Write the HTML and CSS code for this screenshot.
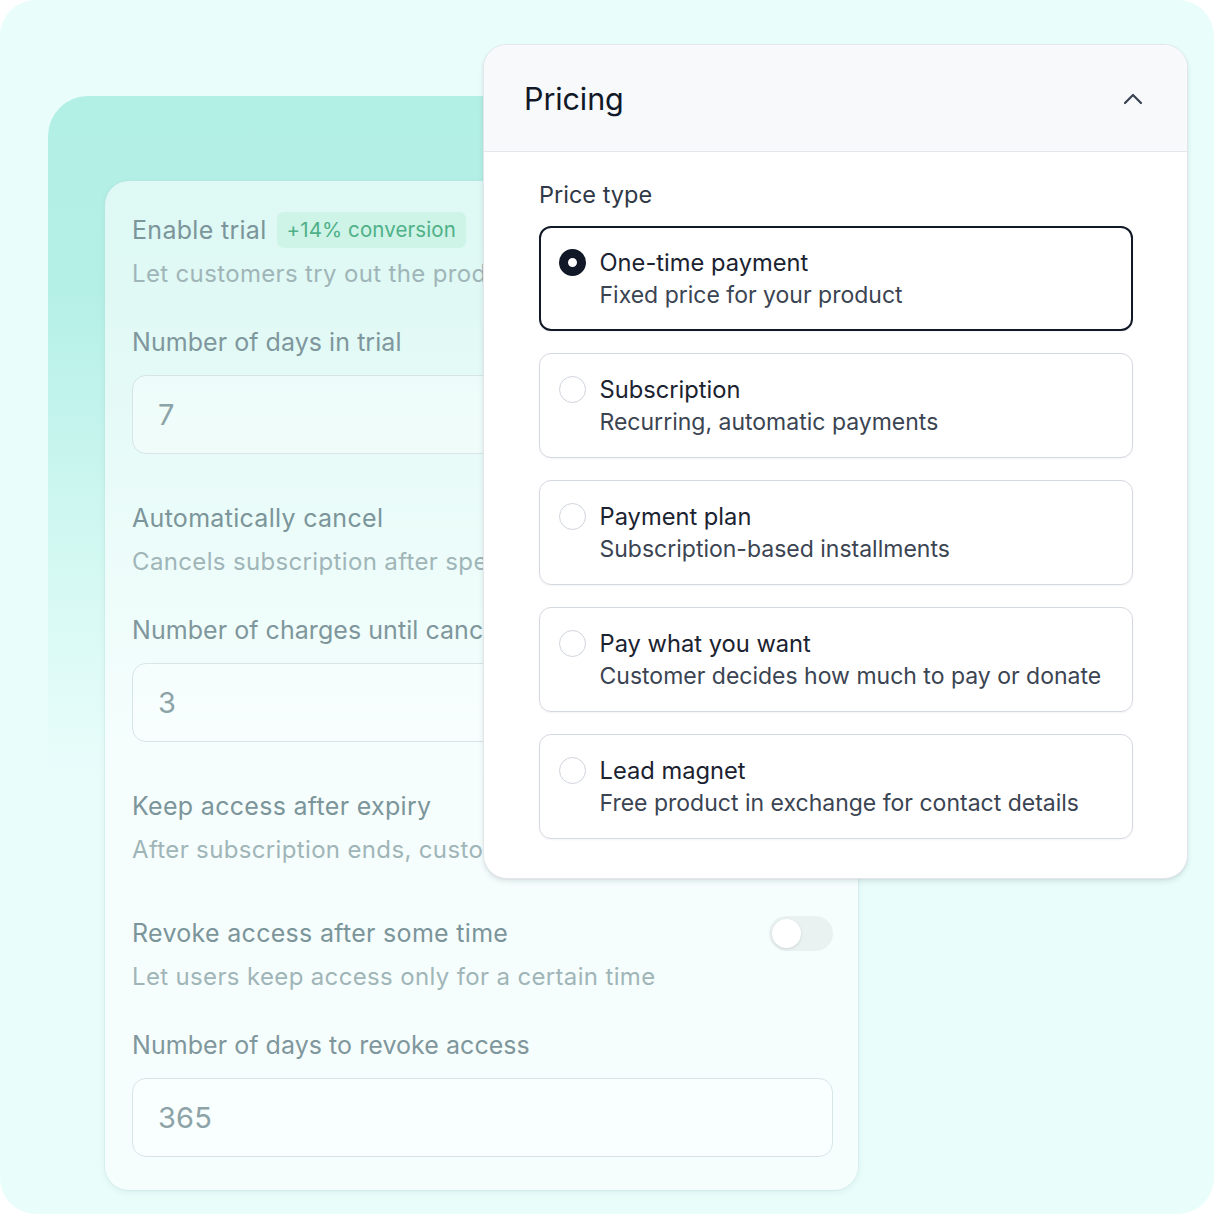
FILE: index.html
```html
<!DOCTYPE html>
<html lang="en">
<head>
<meta charset="utf-8">
<title>Pricing</title>
<link rel="stylesheet" href="styles.css">
</head>
<body>
<div class="frame">
  <div class="teal">
    <div class="back-card">
      <div class="row">
        <div class="title-wrap"><span class="title">Enable trial</span><span class="badge">+14% conversion</span></div>
        <span class="toggle on"><span class="knob"></span></span>
      </div>
      <div class="desc">Let customers try out the product first</div>
      <div class="label">Number of days in trial</div>
      <div class="input">7</div>

      <div class="row sec">
        <span class="title">Automatically cancel</span>
        <span class="toggle on"><span class="knob"></span></span>
      </div>
      <div class="desc">Cancels subscription after specified charges</div>
      <div class="label">Number of charges until cancellation</div>
      <div class="input">3</div>

      <div class="row sec">
        <span class="title">Keep access after expiry</span>
        <span class="toggle"><span class="knob"></span></span>
      </div>
      <div class="desc">After subscription ends, customers keep access</div>

      <div class="row sec2">
        <span class="title">Revoke access after some time</span>
        <span class="toggle"><span class="knob"></span></span>
      </div>
      <div class="desc">Let users keep access only for a certain time</div>
      <div class="label">Number of days to revoke access</div>
      <div class="input">365</div>
    </div>
  </div>

  <div class="pricing">
    <div class="p-head">
      <span class="p-title">Pricing</span>
      <svg class="chev" width="20" height="12" viewBox="0 0 20 12"><path d="M2 10 L10 2 L18 10" fill="none" stroke="#374151" stroke-width="2.2" stroke-linecap="round" stroke-linejoin="round"/></svg>
    </div>
    <div class="p-body">
      <div class="p-label">Price type</div>
      <div class="opt selected">
        <span class="radio"></span>
        <div class="opt-text"><div class="opt-title">One-time payment</div><div class="opt-desc">Fixed price for your product</div></div>
      </div>
      <div class="opt">
        <span class="radio"></span>
        <div class="opt-text"><div class="opt-title">Subscription</div><div class="opt-desc">Recurring, automatic payments</div></div>
      </div>
      <div class="opt">
        <span class="radio"></span>
        <div class="opt-text"><div class="opt-title">Payment plan</div><div class="opt-desc">Subscription-based installments</div></div>
      </div>
      <div class="opt">
        <span class="radio"></span>
        <div class="opt-text"><div class="opt-title">Pay what you want</div><div class="opt-desc">Customer decides how much to pay or donate</div></div>
      </div>
      <div class="opt">
        <span class="radio"></span>
        <div class="opt-text"><div class="opt-title">Lead magnet</div><div class="opt-desc">Free product in exchange for contact details</div></div>
      </div>
    </div>
  </div>
</div>
</body>
</html>
```

FILE: styles.css
```css
* { box-sizing: border-box; }
html, body { margin: 0; padding: 0; background: #ffffff; }
body { font-family: Inter, "Noto Sans", sans-serif; }

.frame {
  position: relative;
  width: 1214px;
  height: 1214px;
  border-radius: 36px;
  background: #e9fdfb;
  overflow: hidden;
  padding: 96px 48px 0 48px;
}

.teal {
  height: 1118px;
  border-radius: 40px 40px 0 0;
  background: linear-gradient(180deg, #b2efe5 0px, #b5f0e7 200px, rgba(200, 246, 238, 0.6) 480px, rgba(233, 253, 251, 0) 680px);
  padding: 85px 0 0 57px;
}

.back-card {
  width: 753px;
  height: 1009px;
  border-radius: 24px;
  background: rgba(255, 255, 255, 0.58);
  box-shadow: 0 2px 6px rgba(120, 160, 160, 0.14), 0 0 0 1px rgba(190, 225, 222, 0.25);
  padding: 31px 25px 0 27px;
  font-size: 24px;
  letter-spacing: 0.2px;
}

.row {
  height: 36px;
  display: flex;
  align-items: center;
  justify-content: space-between;
}
.row.sec { margin-top: 46px; }
.row.sec2 { margin-top: 49px; }

.title-wrap { display: flex; align-items: center; gap: 10px; }
.title { color: #7b959a; line-height: 32px; font-size: 25px; letter-spacing: 0.3px; white-space: nowrap; }
.badge {
  display: inline-block;
  height: 36px;
  line-height: 36px;
  padding: 0 10px;
  border-radius: 7px;
  background: #cdf4e6;
  color: #50b088;
  font-size: 20.5px;
  letter-spacing: 0.1px;
}

.desc { margin-top: 10px; line-height: 32px; color: #a0b5b8; letter-spacing: 0.35px; white-space: nowrap; }
.label { margin-top: 36px; line-height: 32px; color: #7f979c; font-size: 25px; letter-spacing: 0.05px; white-space: nowrap; }

.input {
  margin-top: 17px;
  height: 79px;
  border: 1.5px solid #d7e5e6;
  border-radius: 14px;
  background: rgba(255, 255, 255, 0.35);
  padding-left: 25px;
  display: flex;
  align-items: center;
  font-size: 29px;
  color: #8ca3a7;
}

.toggle {
  width: 64px;
  height: 35px;
  border-radius: 18px;
  background: #eaf1f1;
  padding: 3px;
  display: flex;
}
.toggle .knob {
  width: 29px;
  height: 29px;
  border-radius: 50%;
  background: #ffffff;
  box-shadow: 0 1px 3px rgba(0, 0, 0, 0.12);
}
.toggle.on { justify-content: flex-end; background: #9ed9c7; }

/* Pricing overlay card */
.pricing {
  position: absolute;
  left: 483px;
  top: 44px;
  width: 705px;
  height: 835px;
  border-radius: 24px;
  background: #ffffff;
  border: 1px solid #e3e7ec;
  box-shadow: 0 3px 5px rgba(40, 60, 70, 0.10), 0 1px 2px rgba(40, 60, 70, 0.06);
  overflow: hidden;
}

.p-head {
  height: 107px;
  background: #f8f9fb;
  border-bottom: 1px solid #e5e7eb;
  display: flex;
  align-items: center;
  justify-content: space-between;
  padding: 0 44px 0 40px;
}
.p-title { font-size: 30.5px; color: #111827; letter-spacing: -0.1px; }
.chev { display: block; margin-top: 2px; }

.p-body { padding: 29px 54px 0 55px; }
.p-label { font-size: 23.5px; line-height: 28px; color: #2f3846; margin-bottom: 17px; }

.opt {
  height: 105px;
  border: 1.5px solid #d4d8e0;
  border-radius: 12px;
  display: flex;
  align-items: flex-start;
  padding: 21px 0 0 18.5px;
  margin-bottom: 22px;
  box-shadow: 0 1px 2px rgba(30, 40, 60, 0.05);
}
.opt.selected {
  border: 2.5px solid #111827;
  padding: 20px 0 0 17.5px;
}

.radio {
  flex: none;
  width: 27px;
  height: 27px;
  border-radius: 50%;
  border: 1.5px solid #cfd4dc;
  background: #ffffff;
  margin-top: 1px;
  margin-right: 14px;
}
.selected .radio { border: 9.5px solid #111827; }

.opt-text { font-size: 23px; line-height: 33px; }
.opt-title { color: #1b2230; margin-top: -2px; font-size: 23.7px; }
.opt-desc { color: #3b4452; }
```
